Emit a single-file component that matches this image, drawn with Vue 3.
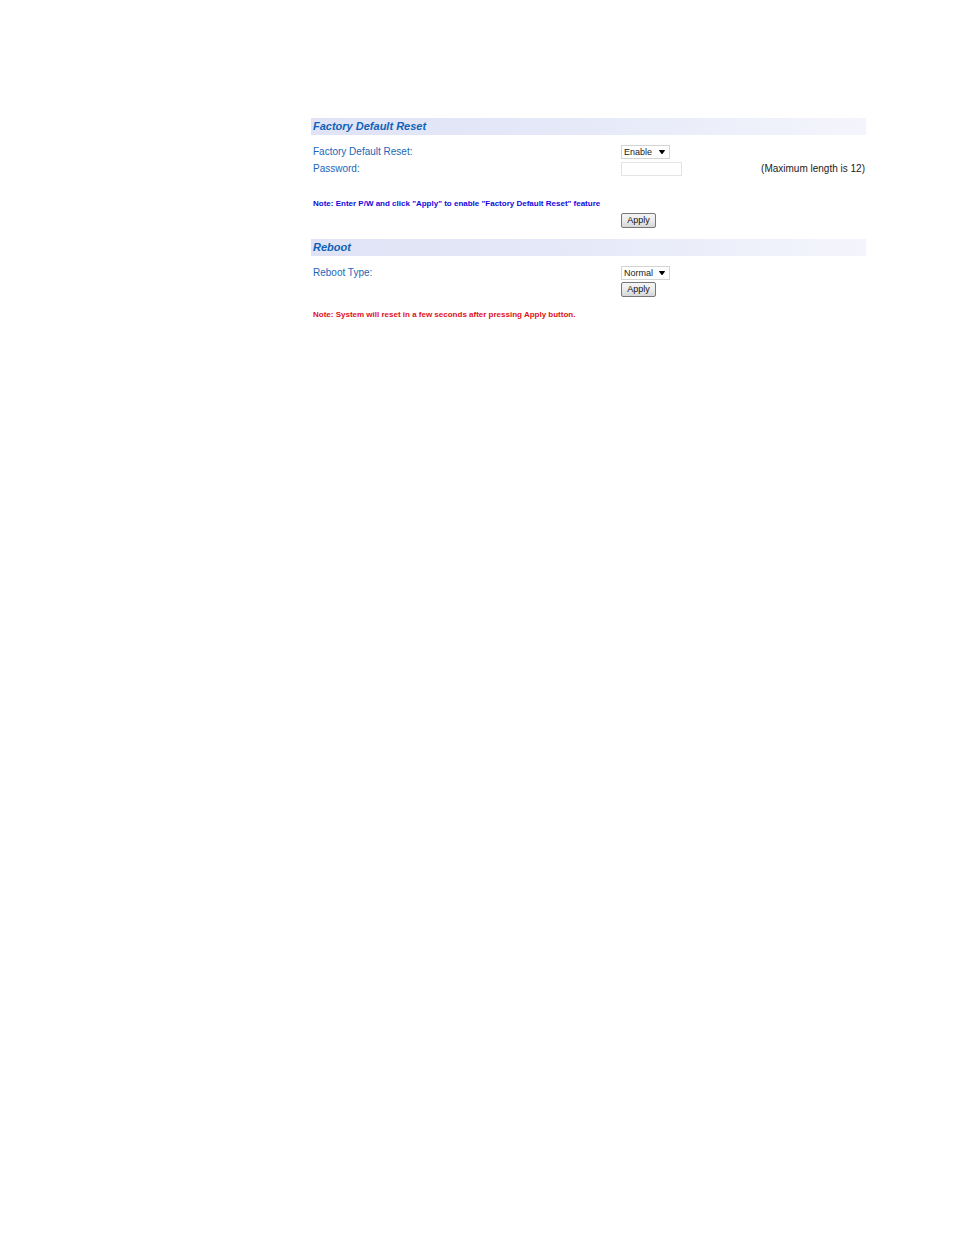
<script setup>
import { ref } from 'vue'

const resetMode = ref('Enable')
const password = ref('')
const rebootType = ref('Normal')
</script>

<template>
  <main class="page">
    <form class="section" @submit.prevent>
      <h2 class="bar">Factory Default Reset</h2>
      <div class="row">
        <label for="reset-mode">Factory Default Reset:</label>
        <div class="picker">
          <select id="reset-mode" v-model="resetMode">
            <option>Enable</option>
            <option>Disable</option>
          </select>
          <svg class="arrow" viewBox="0 0 7 5" aria-hidden="true"><path d="M0 0h7v1L4 5H3L0 1z" /></svg>
        </div>
      </div>
      <div class="row">
        <label for="password">Password:</label>
        <div class="field">
          <input id="password" v-model="password" type="password" maxlength="12" />
          <span class="hint">(Maximum length is 12)</span>
        </div>
      </div>
      <p class="note info">Note: Enter P/W and click "Apply" to enable "Factory Default Reset" feature</p>
      <div class="row">
        <button class="apply" type="submit">Apply</button>
      </div>
    </form>

    <form class="section" @submit.prevent>
      <h2 class="bar">Reboot</h2>
      <div class="row">
        <label for="reboot-type">Reboot Type:</label>
        <div class="picker">
          <select id="reboot-type" v-model="rebootType">
            <option>Normal</option>
            <option>Factory</option>
          </select>
          <svg class="arrow" viewBox="0 0 7 5" aria-hidden="true"><path d="M0 0h7v1L4 5H3L0 1z" /></svg>
        </div>
      </div>
      <div class="row">
        <button class="apply" type="submit">Apply</button>
      </div>
      <p class="note warning">Note: System will reset in a few seconds after pressing Apply button.</p>
    </form>
  </main>
</template>

<style>
body {
  margin: 0;
  background: #fff;
}
</style>

<style scoped>
.page {
  padding: 118px 88px 40px 311px;
  font-family: "Liberation Sans", Arial, sans-serif;
  font-size: 10px;
  color: #222;
}
.section {
  margin-bottom: 10px;
}
.bar {
  margin: 0 0 8px;
  padding-left: 2px;
  font-size: 11px;
  line-height: 17px;
  font-style: italic;
  font-weight: bold;
  color: #0f62b8;
  background: linear-gradient(to right, #dfe3f5, #e6e9f8 50%, #f4f5fc);
}
.row {
  display: grid;
  grid-template-columns: 310fr 245fr;
  align-items: center;
  min-height: 17px;
}
.row label {
  padding-left: 2px;
  color: #1c66b8;
}
.picker {
  position: relative;
  width: 49px;
  height: 14px;
}
.picker select {
  display: block;
  appearance: none;
  box-sizing: border-box;
  width: 100%;
  height: 100%;
  margin: 0;
  padding: 0 0 0 2px;
  border: 1px solid #d4d4d4;
  border-radius: 0;
  background: #fff;
  font-family: inherit;
  font-size: 9px;
  color: #222;
}
.arrow {
  position: absolute;
  top: 5px;
  right: 5px;
  width: 6px;
  height: 4px;
  fill: #000;
  pointer-events: none;
}
.field {
  display: flex;
  align-items: center;
  justify-content: space-between;
}
.field input {
  box-sizing: border-box;
  width: 61px;
  height: 14px;
  padding: 0 3px;
  border: 1px solid #e4e4e4;
  background: #fff;
  font-family: inherit;
  font-size: 9px;
}
.hint {
  padding-right: 1px;
  white-space: nowrap;
}
.apply {
  grid-column: 2;
  box-sizing: border-box;
  width: 35px;
  height: 15px;
  padding: 0;
  border: 1px solid #777;
  border-radius: 2px;
  background: linear-gradient(#f4f4f4, #ebebeb 50%, #d6d6d6);
  font-family: inherit;
  font-size: 9px;
  line-height: 13px;
  color: #111;
}
.note {
  margin: 0;
  padding-left: 2px;
  font-size: 8px;
  line-height: 12px;
  font-weight: bold;
}
.info {
  margin: 21px 0 2px;
  color: #1408e0;
}
.warning {
  margin-top: 11px;
  color: #e01020;
}
</style>
